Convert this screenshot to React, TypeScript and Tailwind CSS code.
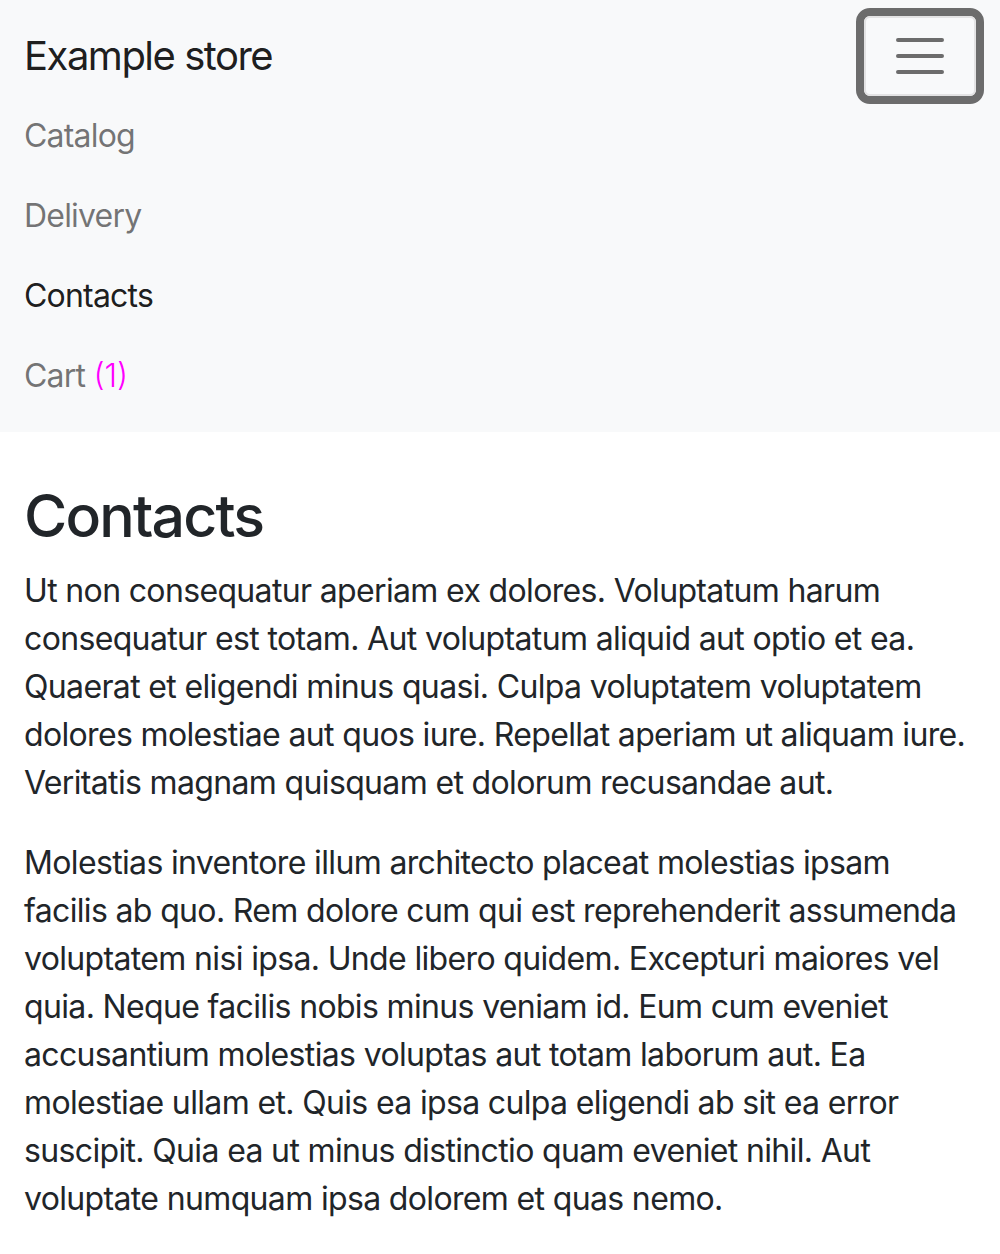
import React from "react";

const links = [
  { label: "Catalog", active: false },
  { label: "Delivery", active: false },
  { label: "Contacts", active: true },
];

function Toggler() {
  return (
    <button className="rounded-[14px] border-[8px] border-[#6c6c6c] bg-transparent">
      <span className="flex h-[80px] w-[112px] items-center justify-center rounded-[6px] border-2 border-[#e3e3e4]">
        <svg width="60" height="60" viewBox="0 0 30 30">
          <path d="M4 7h22M4 15h22M4 23h22" stroke="#6c6c6c" strokeWidth="2" strokeLinecap="round" />
        </svg>
      </span>
    </button>
  );
}

export default function App() {
  return (
    <div className="min-h-[1254px] bg-white text-[#212529] font-['Inter','Liberation_Sans',sans-serif]">
      <nav className="bg-[#f8f9fa] px-6 py-4">
        <div className="relative flex h-[80px] items-center justify-between">
          <a className="py-[10px] text-[40px] leading-[60px] text-black/90 tracking-[-1.5px]">Example store</a>
          <div className="-mr-2">
            <Toggler />
          </div>
        </div>
        <ul className="flex flex-col">
          {links.map((l) => (
            <li key={l.label}>
              <a className={"block py-4 text-[32px] leading-[48px] tracking-[-0.8px] " + (l.active ? "text-black/90" : "text-black/55")}>
                {l.label}
              </a>
            </li>
          ))}
          <li>
            <a className="block py-4 text-[32px] leading-[48px] tracking-[-0.8px] text-black/55">
              Cart <span className="text-[#ff00ff] font-light tracking-normal">(1)</span>
            </a>
          </li>
        </ul>
      </nav>
      <main className="px-6">
        <h1 className="mt-12 mb-4 text-[59px] font-medium leading-[71px] tracking-[-1.8px]">Contacts</h1>
        <p className="mb-8 text-[32px] leading-[48px] tracking-[-0.65px]">
          Ut non consequatur aperiam ex dolores. Voluptatum harum consequatur est totam. Aut voluptatum aliquid aut optio et ea. Quaerat et eligendi minus quasi. Culpa voluptatem voluptatem dolores molestiae aut quos iure. Repellat aperiam ut aliquam iure. Veritatis magnam quisquam et dolorum recusandae aut.
        </p>
        <p className="mb-8 text-[32px] leading-[48px] tracking-[-0.65px]">
          Molestias inventore illum architecto placeat molestias ipsam
          <br />
          facilis ab quo. Rem dolore cum qui est reprehenderit assumenda voluptatem nisi ipsa. Unde libero quidem. Excepturi maiores vel quia. Neque facilis nobis minus veniam id. Eum cum eveniet accusantium molestias voluptas aut totam laborum aut. Ea molestiae ullam et. Quis ea ipsa culpa eligendi ab sit ea error suscipit. Quia ea ut minus distinctio quam eveniet nihil. Aut voluptate numquam ipsa dolorem et quas nemo.
        </p>
      </main>
    </div>
  );
}
